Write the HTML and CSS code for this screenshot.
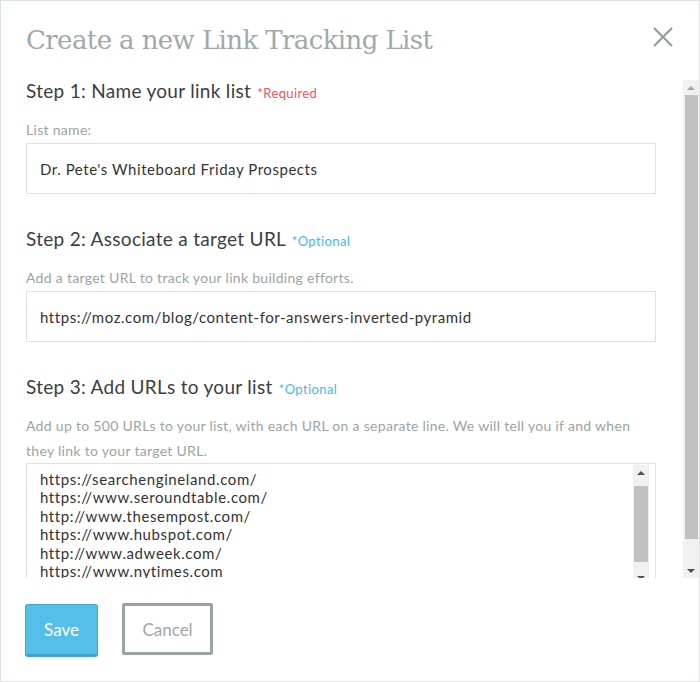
FILE: index.html
```html
<!DOCTYPE html>
<html lang="en">
  <head>
    <meta charset="UTF-8" />
    <meta name="viewport" content="width=device-width, initial-scale=1.0" />
    <title>Create a new Link Tracking List</title>
    <link rel="stylesheet" href="styles.css">
  </head>
  <body>
    <div class="modal">
      <div class="modal-head">
        <h1 class="modal-title">Create a new Link Tracking List</h1>
        <button class="close-btn" type="button" aria-label="Close">
          <svg width="20" height="20" viewBox="0 0 20 20">
            <path d="M1 1 L19 19 M19 1 L1 19" stroke="#8f9a9a" stroke-width="2" fill="none" />
          </svg>
        </button>
      </div>

      <div class="modal-scroll">
        <div class="modal-body">
          <section class="step">
            <h2>Step 1: Name your link list <span class="tag required">*Required</span></h2>
            <label for="list-name">List name:</label>
            <input type="text" id="list-name" value="Dr. Pete's Whiteboard Friday Prospects" />
          </section>

          <section class="step">
            <h2>Step 2: Associate a target URL <span class="tag optional">*Optional</span></h2>
            <label for="target-url">Add a target URL to track your link building efforts.</label>
            <input type="text" id="target-url" value="https://moz.com/blog/content-for-answers-inverted-pyramid" />
          </section>

          <section class="step">
            <h2>Step 3: Add URLs to your list <span class="tag optional">*Optional</span></h2>
            <label for="urls">Add up to 500 URLs to your list, with each URL on a separate line. We will tell you if and when they link to your target URL.</label>
            <div class="textarea-wrap">
              <textarea id="urls">https://searchengineland.com/
https://www.seroundtable.com/
http://www.thesempost.com/
https://www.hubspot.com/
http://www.adweek.com/
https://www.nytimes.com
https://www.searchenginejournal.com/</textarea>
              <div class="scrollbar scrollbar-small">
                <span class="sb-btn sb-up"></span>
                <div class="sb-track"><div class="sb-thumb"></div></div>
                <span class="sb-btn sb-down"></span>
              </div>
            </div>
          </section>
        </div>

        <div class="scrollbar scrollbar-main">
          <span class="sb-btn sb-up sb-off"></span>
          <div class="sb-track"><div class="sb-thumb"></div></div>
          <span class="sb-btn sb-down"></span>
        </div>
      </div>

      <div class="modal-foot">
        <button type="button" class="btn btn-save">Save</button>
        <button type="button" class="btn btn-cancel">Cancel</button>
      </div>
    </div>
  </body>
</html>
```

FILE: styles.css
```css
body {
  margin: 0;
  font-family: Lato, "Open Sans", sans-serif;
  background-color: #fff;
}

.modal {
  width: 700px;
  height: 682px;
  box-sizing: border-box;
  border: 1px solid #dce3e3;
  display: flex;
  flex-direction: column;
  background-color: #fff;
}

.modal-head {
  display: flex;
  justify-content: space-between;
  align-items: flex-start;
  height: 79px;
  flex-shrink: 0;
  box-sizing: border-box;
  padding: 22px 26px 0 25px;
}

.modal-title {
  margin: 0;
  font-family: "DejaVu Serif", serif;
  font-weight: normal;
  font-size: 26px;
  line-height: 34px;
  letter-spacing: -0.6px;
  color: #a0a9a9;
}

.close-btn {
  margin-top: 4px;
  padding: 0;
  border: none;
  background: none;
  width: 20px;
  height: 20px;
  cursor: pointer;
}

.close-btn svg {
  display: block;
}

.modal-scroll {
  display: flex;
  height: 498px;
  flex-shrink: 0;
}

.modal-body {
  flex: 1;
  overflow: hidden;
  padding: 0 27px 0 25px;
}

/* fake classic scrollbars */
.scrollbar {
  width: 16px;
  flex-shrink: 0;
  display: flex;
  flex-direction: column;
  background-color: #f1f1f1;
}

.sb-btn {
  height: 15px;
  flex-shrink: 0;
  display: flex;
  align-items: center;
  justify-content: center;
}

.sb-up::before,
.sb-down::before {
  content: "";
  width: 0;
  height: 0;
  border-left: 4px solid transparent;
  border-right: 4px solid transparent;
}

.sb-up::before {
  border-bottom: 4px solid #505050;
}

.sb-off::before {
  border-bottom-color: #a3a3a3;
}

.sb-down::before {
  border-top: 4px solid #505050;
}

.sb-track {
  flex: 1;
  padding: 0 1px 0 2px;
}

.sb-thumb {
  background-color: #c1c1c1;
}

.scrollbar-main .sb-thumb {
  height: 444px;
}

.scrollbar-small {
  height: 120px;
  margin-top: 1px;
}

.scrollbar-small .sb-track {
  padding: 6px 1px 0 1px;
}

.scrollbar-small .sb-thumb {
  height: 76px;
}

.step {
  margin-bottom: 34px;
}

.step:last-child {
  margin-bottom: 0;
}

.step h2 {
  margin: 0;
  height: 22px;
  font-size: 19px;
  font-weight: normal;
  line-height: 22px;
  letter-spacing: 0.3px;
  color: #3b4045;
}

.tag {
  margin-left: 1px;
  font-size: 13px;
  line-height: 1;
  letter-spacing: 0.4px;
}

.required {
  color: #f2515c;
}

.optional {
  color: #3fbbeb;
}

.step label {
  display: block;
  margin-top: 15px;
  font-size: 14px;
  line-height: 25px;
  letter-spacing: 0.3px;
  color: #9ba4a4;
}

.step input[type="text"] {
  display: block;
  width: 100%;
  height: 51px;
  box-sizing: border-box;
  margin-top: 1px;
  padding: 0 13px;
  border: 1px solid #dde3e3;
  font-family: Lato, sans-serif;
  font-size: 15px;
  letter-spacing: 0.55px;
  color: #333;
  outline: none;
}

.textarea-wrap {
  display: flex;
  align-items: flex-start;
  border: 1px solid #dde3e3;
  border-bottom: none;
  padding: 0 6px 0 0;
  height: 122px;
  box-sizing: border-box;
}

.textarea-wrap textarea {
  flex: 1;
  display: block;
  height: 121px;
  box-sizing: border-box;
  margin: 0;
  padding: 6px 13px;
  border: none;
  resize: none;
  overflow: hidden;
  font-family: Lato, sans-serif;
  font-size: 15px;
  line-height: 18.4px;
  letter-spacing: 0.6px;
  color: #333;
  outline: none;
}

.modal-foot {
  display: flex;
  gap: 24px;
  align-items: flex-start;
  padding: 25px 24px 0;
}

.btn {
  font-family: Lato, sans-serif;
  font-size: 17px;
  cursor: pointer;
  border-radius: 3px;
}

.btn-save {
  width: 73px;
  height: 53px;
  margin-top: 1px;
  color: #fff;
  background-color: #53bfea;
  border: 1px solid #3ea6d0;
  border-bottom-width: 3px;
}

.btn-cancel {
  width: 91px;
  height: 52px;
  color: #9ea7a7;
  background-color: #fff;
  border: 3px solid #9ba4a4;
  border-radius: 2px;
}
```
